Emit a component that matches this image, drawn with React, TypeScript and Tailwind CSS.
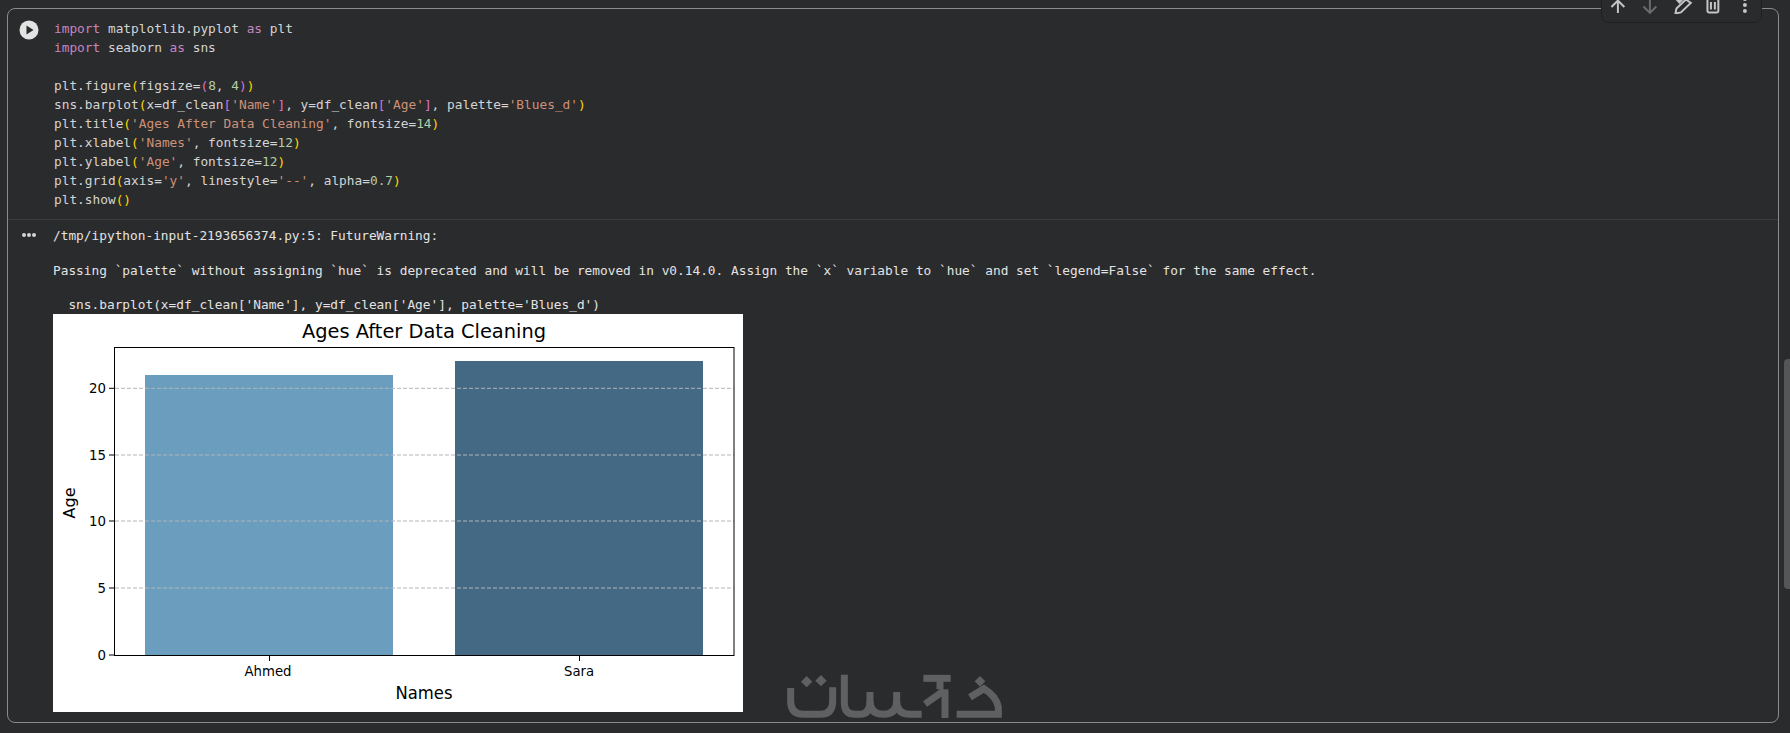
const Kw = ({ children }: { children: string }) => <span className="text-[#c586c0]">{children}</span>;
const Str = ({ children }: { children: string }) => <span className="text-[#ce9178]">{children}</span>;
const Num = ({ children }: { children: string }) => <span className="text-[#b5cea8]">{children}</span>;
const Y = ({ children }: { children: string }) => <span className="text-[#ffd700]">{children}</span>;
const P = ({ children }: { children: string }) => <span className="text-[#da70d6]">{children}</span>;

function CodeLines() {
  return (
    <pre className="font-['DejaVu_Sans_Mono',monospace] text-[12.8px] leading-[19px] text-[#d4d4d4]">
      <div><Kw>import</Kw> matplotlib.pyplot <Kw>as</Kw> plt</div>
      <div><Kw>import</Kw> seaborn <Kw>as</Kw> sns</div>
      <div>&nbsp;</div>
      <div>plt.figure<Y>(</Y>figsize=<P>(</P><Num>8</Num>, <Num>4</Num><P>)</P><Y>)</Y></div>
      <div>sns.barplot<Y>(</Y>x=df_clean<P>[</P><Str>'Name'</Str><P>]</P>, y=df_clean<P>[</P><Str>'Age'</Str><P>]</P>, palette=<Str>'Blues_d'</Str><Y>)</Y></div>
      <div>plt.title<Y>(</Y><Str>'Ages After Data Cleaning'</Str>, fontsize=<Num>14</Num><Y>)</Y></div>
      <div>plt.xlabel<Y>(</Y><Str>'Names'</Str>, fontsize=<Num>12</Num><Y>)</Y></div>
      <div>plt.ylabel<Y>(</Y><Str>'Age'</Str>, fontsize=<Num>12</Num><Y>)</Y></div>
      <div>plt.grid<Y>(</Y>axis=<Str>'y'</Str>, linestyle=<Str>'--'</Str>, alpha=<Num>0.7</Num><Y>)</Y></div>
      <div>plt.show<Y>()</Y></div>
    </pre>
  );
}

function Chart() {
  const gridY = [74.3, 141, 207, 274];
  const yTicks = [
    { y: 341, label: "0", w: 8.5 },
    { y: 274, label: "5", w: 8.5 },
    { y: 207, label: "10", w: 17 },
    { y: 141, label: "15", w: 17 },
    { y: 74.3, label: "20", w: 17 },
  ];
  return (
    <svg width="690" height="398" viewBox="0 0 690 398" className="mt-[1px] block bg-white font-['DejaVu_Sans',sans-serif]">
      <rect x="92" y="61" width="248" height="280" fill="#6b9dbf" />
      <rect x="402" y="47" width="248" height="294" fill="#436985" />
      {gridY.map((y) => (
        <line key={y} x1="62" x2="681" y1={y} y2={y} stroke="#b5b5b5" strokeDasharray="4 2" />
      ))}
      <rect x="61.5" y="33.5" width="619.5" height="308" fill="none" stroke="#000" strokeWidth="1" />
      {yTicks.map((t) => (
        <g key={t.label}>
          <line x1="56" x2="61" y1={t.y} y2={t.y} stroke="#000" />
          <text x={53 - t.w} y={t.y + 5} fontSize="14" textLength={t.w} lengthAdjust="spacingAndGlyphs">{t.label}</text>
        </g>
      ))}
      <line x1="216.5" x2="216.5" y1="342" y2="347" stroke="#000" />
      <line x1="526.5" x2="526.5" y1="342" y2="347" stroke="#000" />
      <text x="191.5" y="362" fontSize="14.5" textLength="47" lengthAdjust="spacingAndGlyphs">Ahmed</text>
      <text x="511" y="362" fontSize="14.5" textLength="30" lengthAdjust="spacingAndGlyphs">Sara</text>
      <text x="342.5" y="385" fontSize="18" textLength="57" lengthAdjust="spacingAndGlyphs">Names</text>
      <text x="249" y="24" fontSize="19.4" textLength="244" lengthAdjust="spacingAndGlyphs">Ages After Data Cleaning</text>
      <text transform="translate(22 189) rotate(-90)" fontSize="16" textAnchor="middle">Age</text>
    </svg>
  );
}

function Logo() {
  return (
    <svg width="230" height="55" viewBox="0 0 690 165" fill="none" stroke="#5f6062" strokeWidth="21" className="absolute left-[780px] top-[668px]">
      <path d="M32 60V100Q32 139 70 139H122Q158 139 158 100V58" />
      <path d="M193 20V105Q193 139 225 139H240Q270 139 270 100V72" />
      <path d="M270 100Q270 139 310 139Q350 139 350 100V72" />
      <path d="M350 100Q350 139 390 139H425" />
      <path d="M430 31H512" />
      <path d="M480 31V64" />
      <path d="M435 108L492 68" />
      <path d="M495 64V150" />
      <path d="M530 139H655V118Q650 85 612 62L570 88" />
      <path d="M80 24L97 41L80 58L63 41Z" fill="#5f6062" stroke="none" />
      <path d="M123 21L140 38L123 55L106 38Z" fill="#5f6062" stroke="none" />
      <path d="M600 24L616 40L600 56L584 40Z" fill="#5f6062" stroke="none" />
    </svg>
  );
}

function ToolbarIcons() {
  return (
    <>
      <svg width="24" height="24" viewBox="0 0 24 24" fill="none" stroke="currentColor" strokeWidth="2" className="mx-1">
        <path d="M12 23V11M5.5 17L12 10.5L18.5 17" />
      </svg>
      <svg width="24" height="24" viewBox="0 0 24 24" fill="none" stroke="#6a6b6d" strokeWidth="2" className="mx-1">
        <path d="M12 8V22M5.5 16.5L12 23L18.5 16.5" />
      </svg>
      <svg width="24" height="24" viewBox="0 0 24 24" fill="none" stroke="currentColor" strokeWidth="2" className="mx-1">
        <path d="M5.5 23.5L6.5 18.5L16 9.5L21 13L11 22.5Z" />
        <path d="M4 8H15L9.5 14Z" fill="currentColor" stroke="none" />
      </svg>
      <svg width="24" height="24" viewBox="0 0 24 24" fill="none" stroke="currentColor" strokeWidth="2" className="mx-1">
        <rect x="6.5" y="8" width="11" height="14.5" rx="1.5" />
        <path d="M10 12V19.5M14 12V19.5" />
      </svg>
      <svg width="24" height="24" viewBox="0 0 24 24" fill="currentColor" className="mx-1">
        <circle cx="12" cy="9" r="2" />
        <circle cx="12" cy="15" r="2" />
        <circle cx="12" cy="21" r="2" />
      </svg>
    </>
  );
}

export default function App() {
  return (
    <div className="relative h-[733px] w-[1790px] overflow-hidden bg-[#2a2b2d] pl-[7px] pt-2">
      <div className="relative flex h-[715px] w-[1772px] flex-col rounded-lg border border-[#8a8b8c]">
        <div className="flex h-[210px] pt-[10px]">
          <div className="flex w-[46px] justify-center pt-[1px]">
            <svg width="20" height="20" viewBox="0 0 20 20" className="ml-[-4px]">
              <circle cx="10" cy="10" r="9.5" fill="#e3e3e3" />
              <path d="M7.5 5.5L14.5 10L7.5 14.5Z" fill="#2a2b2d" />
            </svg>
          </div>
          <CodeLines />
        </div>
        <div className="flex border-t border-[#3c3d3f] pt-[7px]">
          <div className="flex w-[45px] justify-center pt-[6px]">
            <div className="ml-[-4px] flex gap-[1px]">
              <span className="h-1 w-1 rounded-full bg-[#d4d4d4]" />
              <span className="h-1 w-1 rounded-full bg-[#d4d4d4]" />
              <span className="h-1 w-1 rounded-full bg-[#d4d4d4]" />
            </div>
          </div>
          <div>
            <pre className="font-['DejaVu_Sans_Mono',monospace] text-[12.8px] leading-[17.25px] text-[#e3e3e3]">
              <div>/tmp/ipython-input-2193656374.py:5: FutureWarning:</div>
              <div>&nbsp;</div>
              <div>Passing `palette` without assigning `hue` is deprecated and will be removed in v0.14.0. Assign the `x` variable to `hue` and set `legend=False` for the same effect.</div>
              <div>&nbsp;</div>
              <div>  sns.barplot(x=df_clean['Name'], y=df_clean['Age'], palette='Blues_d')</div>
            </pre>
            <Chart />
          </div>
        </div>

        {/* cell toolbar, cut off by the top of the window */}
        <div className="absolute right-[16px] top-[-28px] flex h-[42px] w-[161px] items-center justify-center rounded-lg border border-[#1f2022] bg-[#2a2b2d] text-[#c4c5c6]">
          <ToolbarIcons />
        </div>
      </div>

      <Logo />
      <div className="absolute right-0 top-[359px] h-[230px] w-[6px] rounded-l bg-[#555658]" />
    </div>
  );
}
